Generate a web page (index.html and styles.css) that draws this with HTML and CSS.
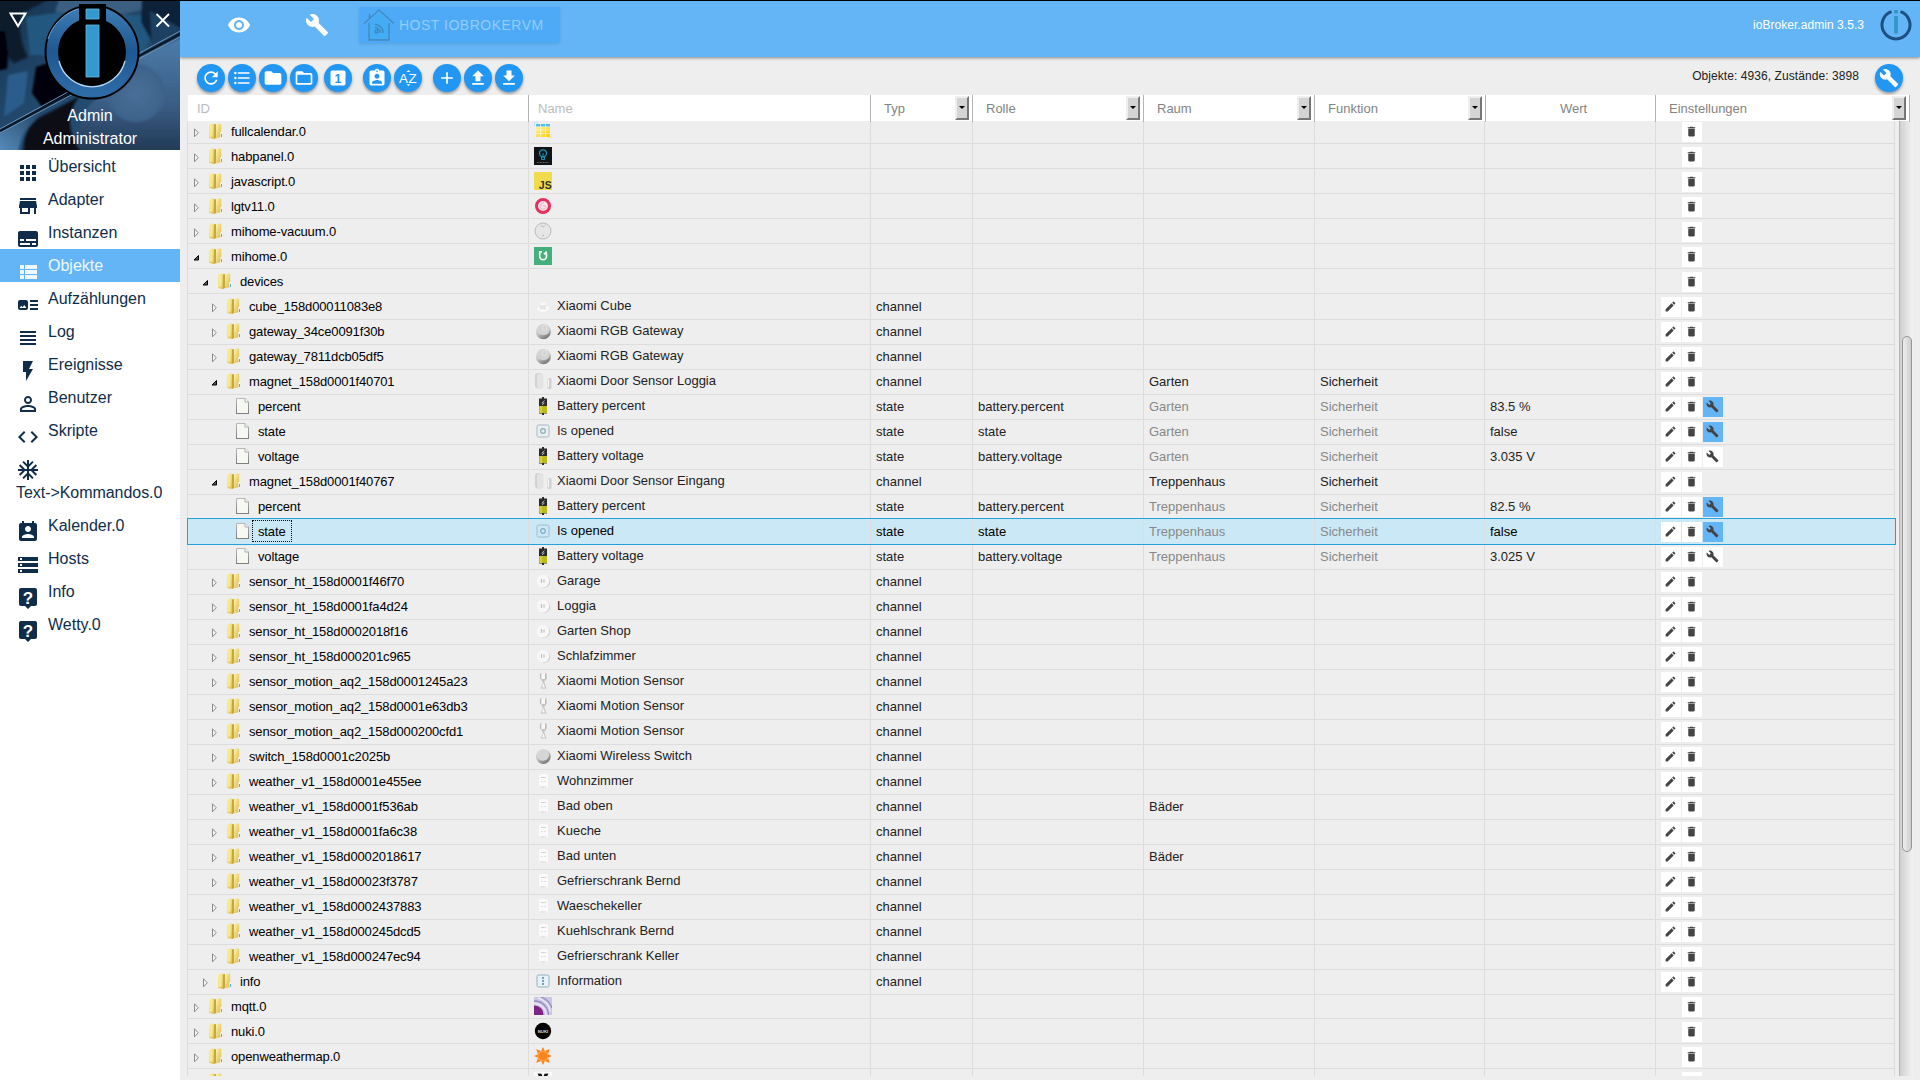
FILE: index.html
```html
<!DOCTYPE html>
<html lang="de">
<head>
    <meta charset="utf-8">
    <title>ioBroker.admin</title>
    <link rel="stylesheet" href="styles.css">
</head>
<body>
    <!-- shared gradients -->
    <svg class="gradients" width="0" height="0">
        <defs>
            <linearGradient id="g-folder" x1="0" x2="1" y1="0" y2="1"><stop offset="0" stop-color="#fdf6b0"/><stop offset="1" stop-color="#d9b548"/></linearGradient>
            <linearGradient id="g-doc" x1="0" x2="0" y1="0" y2="1"><stop offset="0" stop-color="#b8b8b8"/><stop offset="1" stop-color="#7c7c7c"/></linearGradient>
            <linearGradient id="g-ring" x1="0" x2="0" y1="0" y2="1"><stop offset="0" stop-color="#3a78b0"/><stop offset=".5" stop-color="#1f5791"/><stop offset="1" stop-color="#2d6ba6"/></linearGradient>
            <linearGradient id="g-knob" x1="0" x2=".6" y1="0" y2="1"><stop offset="0" stop-color="#f0f0f0"/><stop offset=".55" stop-color="#c4c4c4"/><stop offset="1" stop-color="#777"/></linearGradient>
            <linearGradient id="g-cal" x1="0" x2="1" y1="0" y2="1"><stop offset="0" stop-color="#fff0a0"/><stop offset="1" stop-color="#fc0"/></linearGradient>
        </defs>
    </svg>

    <!-- icon sprite -->
    <svg class="sprite">
        <symbol id="apps" viewBox="0 0 24 24"><path d="M4 8h4V4H4v4zm6 12h4v-4h-4v4zm-6 0h4v-4H4v4zm0-6h4v-4H4v4zm6 0h4v-4h-4v4zm6-10v4h4V4h-4zm-6 4h4V4h-4v4zm6 6h4v-4h-4v4zm0 6h4v-4h-4v4z"/></symbol>
        <symbol id="store" viewBox="0 0 24 24"><path d="M20 4H4v2h16V4zm1 10v-2l-1-5H4l-1 5v2h1v6h10v-6h4v6h2v-6h1zm-9 4H6v-4h6v4z"/></symbol>
        <symbol id="subtitles" viewBox="0 0 24 24"><path d="M20 4H4c-1.100 0-2 .9-2 2v12c0 1.100.9 2 2 2h16c1.100 0 2-.9 2-2V6c0-1.100-.9-2-2-2zM4 12h4v2H4v-2zm10 6H4v-2h10v2zm6 0h-4v-2h4v2zm0-4H10v-2h10v2z"/></symbol>
        <symbol id="view_list" viewBox="0 0 24 24"><path d="M4 14h4v-4H4v4zm0 5h4v-4H4v4zM4 9h4V5H4v4zm5 5h12v-4H9v4zm0 5h12v-4H9v4zM9 5v4h12V5H9z"/></symbol>
        <symbol id="art_track" viewBox="0 0 24 24"><path d="M22 13h-8v-2h8v2zm0-6h-8v2h8V7zm-8 10h8v-2h-8v2zm-2-8v6c0 1.100-.9 2-2 2H4c-1.100 0-2-.9-2-2V9c0-1.100.9-2 2-2h6c1.100 0 2 .9 2 2zm-1.500 6l-2.250-3-1.750 2.260-1.250-1.510L3.500 15h7z"/></symbol>
        <symbol id="headline" viewBox="0 0 24 24"><path d="M4 15h16v-2H4v2zm0 4h16v-2H4v2zm0-8h16V9H4v2zm0-6v2h16V5H4z"/></symbol>
        <symbol id="flash" viewBox="0 0 24 24"><path d="M7 2v11h3v9l7-12h-4l4-8z"/></symbol>
        <symbol id="person" viewBox="0 0 24 24"><path d="M12 5.900a2.100 2.100 0 1 1 0 4.200 2.100 2.100 0 0 1 0-4.200m0 9c2.970 0 6.100 1.460 6.100 2.100v1.100H5.900V17c0-.64 3.130-2.100 6.100-2.100M12 4C9.790 4 8 5.790 8 8s1.790 4 4 4 4-1.790 4-4-1.790-4-4-4zm0 9c-2.670 0-8 1.340-8 4v3h16v-3c0-2.660-5.330-4-8-4z"/></symbol>
        <symbol id="code" viewBox="0 0 24 24"><path d="M9.400 16.600L4.800 12l4.600-4.600L8 6l-6 6 6 6 1.400-1.400zm5.200 0l4.600-4.600-4.600-4.600L16 6l6 6-6 6-1.400-1.400z"/></symbol>
        <symbol id="ac_unit" viewBox="0 0 24 24"><path d="M22 11h-4.170l3.240-3.240-1.410-1.420L15 11h-2V9l4.660-4.660-1.420-1.410L13 6.170V2h-2v4.170L7.760 2.930 6.340 4.340 11 9v2H9L4.340 6.340 2.930 7.760 6.170 11H2v2h4.170l-3.240 3.240 1.410 1.420L9 13h2v2l-4.660 4.660 1.420 1.410L11 17.830V22h2v-4.170l3.240 3.240 1.420-1.410L13 15v-2h2l4.660 4.660 1.410-1.420L17.830 13H22z"/></symbol>
        <symbol id="contact" viewBox="0 0 24 24"><path d="M19 3h-1V1h-2v2H8V1H6v2H5c-1.110 0-2 .9-2 2v14c0 1.100.89 2 2 2h14c1.100 0 2-.9 2-2V5c0-1.100-.9-2-2-2zm-7 3c1.660 0 3 1.340 3 3s-1.340 3-3 3-3-1.340-3-3 1.340-3 3-3zm6 12H6v-1c0-2 4-3.100 6-3.100s6 1.100 6 3.100v1z"/></symbol>
        <symbol id="storage" viewBox="0 0 24 24"><path d="M2 20h20v-4H2v4zm2-3h2v2H4v-2zM2 4v4h20V4H2zm4 3H4V5h2v2zm-4 7h20v-4H2v4zm2-3h2v2H4v-2z"/></symbol>
        <symbol id="live_help" viewBox="0 0 24 24"><path d="M19 2H5c-1.100 0-2 .9-2 2v14c0 1.100.9 2 2 2h4l3 3 3-3h4c1.100 0 2-.9 2-2V4c0-1.100-.9-2-2-2z"/><text x="12" y="17.500" font-size="17" font-weight="bold" text-anchor="middle" fill="#fff">?</text></symbol>
        <symbol id="eye" viewBox="0 0 24 24"><path d="M12 4.500C7 4.500 2.730 7.610 1 12c1.730 4.390 6 7.500 11 7.500s9.270-3.110 11-7.500c-1.730-4.390-6-7.500-11-7.500zM12 17c-2.760 0-5-2.240-5-5s2.240-5 5-5 5 2.240 5 5-2.240 5-5 5zm0-8c-1.660 0-3 1.340-3 3s1.340 3 3 3 3-1.340 3-3-1.340-3-3-3z"/></symbol>
        <symbol id="build" viewBox="0 0 24 24"><path d="M22.700 19l-9.100-9.100c.9-2.300.4-5-1.500-6.900-2-2-5-2.400-7.400-1.300L9 6 6 9 1.600 4.700C.4 7.100.9 10.100 2.900 12.100c1.900 1.900 4.600 2.400 6.900 1.500l9.100 9.100c.4.4 1 .4 1.400 0l2.300-2.300c.5-.4.5-1.100.1-1.400z"/></symbol>
        <symbol id="refresh" viewBox="0 0 24 24"><path d="M17.650 6.350C16.200 4.900 14.210 4 12 4c-4.420 0-7.990 3.580-7.990 8s3.570 8 7.990 8c3.730 0 6.840-2.550 7.730-6h-2.080c-.82 2.330-3.040 4-5.650 4-3.310 0-6-2.690-6-6s2.690-6 6-6c1.660 0 3.140.69 4.220 1.780L13 11h7V4l-2.350 2.350z"/></symbol>
        <symbol id="list" viewBox="0 0 24 24"><path d="M4 10.500a1.500 1.500 0 1 0 0 3 1.500 1.500 0 0 0 0-3zm0-6a1.500 1.500 0 1 0 0 3 1.500 1.500 0 0 0 0-3zm0 12a1.500 1.500 0 1 0 0 3 1.500 1.500 0 0 0 0-3zM7 19h14v-2H7v2zm0-6h14v-2H7v2zm0-8v2h14V5H7z"/></symbol>
        <symbol id="folder" viewBox="0 0 24 24"><path d="M10 4H4c-1.100 0-1.990.9-1.990 2L2 18c0 1.100.9 2 2 2h16c1.100 0 2-.9 2-2V8c0-1.100-.9-2-2-2h-8l-2-2z"/></symbol>
        <symbol id="folder_open" viewBox="0 0 24 24"><path d="M20 6h-8l-2-2H4c-1.100 0-1.990.9-1.990 2L2 18c0 1.100.9 2 2 2h16c1.100 0 2-.9 2-2V8c0-1.100-.9-2-2-2zm0 12H4V8h16v10z"/></symbol>
        <symbol id="looks_one" viewBox="0 0 24 24"><rect x="3" y="3" width="18" height="18" rx="2"/><text x="12" y="17.500" font-size="15" font-weight="bold" text-anchor="middle" fill="#2196f3">1</text></symbol>
        <symbol id="assignment" viewBox="0 0 24 24"><path d="M19 3h-4.180C14.400 1.840 13.300 1 12 1c-1.300 0-2.400.84-2.820 2H5c-1.100 0-2 .9-2 2v14c0 1.100.9 2 2 2h14c1.100 0 2-.9 2-2V5c0-1.100-.9-2-2-2zm-7 0c.55 0 1 .45 1 1s-.45 1-1 1-1-.45-1-1 .45-1 1-1zm0 4c1.660 0 3 1.340 3 3s-1.340 3-3 3-3-1.340-3-3 1.340-3 3-3zm6 12H6v-1.400c0-2 4-3.100 6-3.100s6 1.100 6 3.100V19z"/></symbol>
        <symbol id="sort_az" viewBox="0 0 24 24"><path d="M14.940 4.660h-4.720l2.360-2.360zM10.250 19.370h4.660l-2.330 2.330z"/><text x="1.200" y="17.700" font-size="16">A</text><text x="12.600" y="17.700" font-size="16">Z</text></symbol>
        <symbol id="add" viewBox="0 0 24 24"><path d="M19 13h-6v6h-2v-6H5v-2h6V5h2v6h6v2z"/></symbol>
        <symbol id="upload" viewBox="0 0 24 24"><path d="M9 16h6v-6h4l-7-7-7 7h4zm-4 2h14v2H5z"/></symbol>
        <symbol id="download" viewBox="0 0 24 24"><path d="M19 9h-4V3H9v6H5l7 7 7-7zM5 18v2h14v-2H5z"/></symbol>
        <symbol id="edit" viewBox="0 0 24 24"><path d="M3 17.250V21h3.750L17.810 9.940l-3.750-3.750L3 17.250zM20.710 7.040c.39-.39.39-1.020 0-1.410l-2.340-2.340c-.39-.39-1.020-.39-1.410 0l-1.830 1.830 3.750 3.750 1.830-1.830z"/></symbol>
        <symbol id="delete" viewBox="0 0 24 24"><path d="M6 19c0 1.100.9 2 2 2h8c1.100 0 2-.9 2-2V7H6v12zM19 4h-3.500l-1-1h-5l-1 1H5v2h14V4z"/></symbol>

        <!-- tree -->
        <symbol id="t-folder" viewBox="0 0 16 16"><path d="M1 1.500L5.500.3 7 1.500V16l-2.500-.3L1 15z" fill="url(#g-folder)"/><path d="M1.500 2l3-.6v12l-3 .6z" fill="#f6e98e"/><path d="M6 1.500l2-.5v14l-2 1z" fill="#c9a63c"/><path d="M8 1.200L12 .3l1.200 1V14L8 15.500z" fill="url(#g-folder)"/><path d="M12.300 9h1.700v5.300h-1.700z" fill="#f7f7f0"/><path d="M13 11h1v3h-1z" fill="#4ab0e8"/></symbol>
        <symbol id="t-doc" viewBox="0 0 16 16"><path d="M1.500.5h8.500l3.500 3.500v11.500h-12z" fill="#f6f9f2" stroke="url(#g-doc)"/><path d="M10 .5V4h3.500" fill="#fff" stroke="#aaa"/><path d="M1 15.500h13" stroke="#808080"/></symbol>
        <symbol id="t-closed" viewBox="0 0 16 16"><path d="M6.500 3.800v8L10.300 7.800z" fill="#f5f5f5" stroke="#8c8c8c"/></symbol>
        <symbol id="t-open" viewBox="0 0 16 16"><path d="M10.500 5.500v4.500H6z" fill="#595959" stroke="#000"/></symbol>

        <!-- object icons -->
        <symbol id="o-calendar" viewBox="0 0 18 18"><path d="M.5 4V.5H4" fill="none" stroke="#bfe6f5"/><path d="M14 15.500h3.500v-3" fill="none" stroke="#fde28a"/><rect x="2" y="2" width="14" height="2.400" fill="#4fbfe8"/><rect x="2" y="5" width="14" height="10" fill="url(#g-cal)"/><path d="M6.500 2v13M11.500 2v13M2 8h14M2 11.500h14" stroke="#fff6cf" stroke-width=".7"/></symbol>
        <symbol id="o-habpanel" viewBox="0 0 18 18"><rect width="18" height="18" fill="#111518"/><circle cx="9" cy="6.300" r="3.500" fill="none" stroke="#1795b5" stroke-width="1.300"/><path d="M7.500 9.500v3h3v-3M9 6v5" fill="none" stroke="#1795b5"/><path d="M3 15.500h12" stroke="#666" stroke-width="1" stroke-dasharray="1 .5"/></symbol>
        <symbol id="o-js" viewBox="0 0 18 18"><rect width="18" height="18" fill="#f0db4f"/><text x="4.800" y="16.500" font-size="10.500" font-weight="bold" fill="#323330">JS</text></symbol>
        <symbol id="o-lg" viewBox="0 0 18 18"><circle cx="9" cy="9" r="6.500" fill="#fbe4ea" stroke="#e5305f" stroke-width="3"/><path d="M6.500 7l1.500 2M9 9h3a3 3 0 1 1-2-2.800" fill="none" stroke="#f0a0b5" stroke-width=".8"/></symbol>
        <symbol id="o-vacuum" viewBox="0 0 18 18"><circle cx="9" cy="9" r="8" fill="#e6e6e6" stroke="#bdbdbd"/><path d="M6.500 3l2.500 2 2.500-2" fill="none" stroke="#bbb"/><circle cx="9" cy="13.500" r=".8" fill="#aaa"/></symbol>
        <symbol id="o-mihome" viewBox="0 0 18 18"><rect width="18" height="18" fill="#43b07c"/><path d="M8 4.800H5.700v4.500a3.400 3.400 0 0 0 6.800 0V6.500M10 7.500l2.700-2.900" fill="none" stroke="#fff" stroke-width="1.700"/></symbol>
        <symbol id="o-cube" viewBox="0 0 18 18"><ellipse cx="9" cy="11.500" rx="5.800" ry="3.200" fill="#fbfbfb"/><path d="M5.500 6.500h6.500v6H5.500z" fill="#e6e6e6"/><ellipse cx="8.800" cy="6.800" rx="3.200" ry="1.500" fill="#f8f8f8"/></symbol>
        <symbol id="o-gateway" viewBox="0 0 18 18"><circle cx="9.300" cy="9.800" r="7.500" fill="url(#g-knob)"/><ellipse cx="9.500" cy="7.500" rx="6.300" ry="5.500" fill="#d3d3d3"/><circle cx="10.500" cy="6" r="2.500" fill="none" stroke="#e6e6e6"/></symbol>
        <symbol id="o-switch" viewBox="0 0 18 18"><circle cx="9.300" cy="9.500" r="7.400" fill="url(#g-knob)"/><ellipse cx="9" cy="8" rx="6" ry="5.800" fill="#d6d6d6"/></symbol>
        <symbol id="o-magnet" viewBox="0 0 18 18"><rect x="1" y="1" width="7.500" height="15.500" rx="3" fill="#d2d2d2"/><rect x="3" y="1.500" width="6.500" height="15" rx="2.500" fill="#e3e3e3"/><rect x="13.500" y="6" width="4" height="11" rx="1.500" fill="#d0d0d0"/><path d="M14.500 7v8" stroke="#f8f8f8"/></symbol>
        <symbol id="o-battery" viewBox="0 0 18 18"><path d="M8 0h2v1.500h3v15h-3V18H8v-1.500H5v-15h3z" fill="#2a2a2a"/><path d="M5 9h8v7H5z" fill="#bdbb1c"/><path d="M7 9v7" stroke="#e6e65a"/><path d="M10.500 3.500L7.800 6h2.500L8 8" fill="none" stroke="#aaa"/></symbol>
        <symbol id="o-state" viewBox="0 0 18 18"><rect x="3" y="3" width="12" height="12" rx="1.500" fill="none" stroke="#9cbcc8"/><circle cx="9" cy="9" r="2.300" fill="none" stroke="#7eafc0" stroke-width="1.200"/></symbol>
        <symbol id="o-info" viewBox="0 0 18 18"><rect x="3" y="3" width="12" height="12" rx="1.500" fill="#e9f1f4" stroke="#8fb3c2"/><path d="M9 5v8" stroke="#2e7c96" stroke-width="1.300" stroke-dasharray="2 1"/></symbol>
        <symbol id="o-sensor" viewBox="0 0 18 18"><circle cx="10.300" cy="9.800" r="6" fill="#cfcfcf"/><circle cx="9" cy="9" r="6.300" fill="#f7f7f7"/><path d="M7.500 7v4M10 7.500v3" stroke="#c0c0c0" stroke-width="1.200"/></symbol>
        <symbol id="o-motion" viewBox="0 0 18 18"><path d="M6 1.500h1.500v5.500H6zM11 1.500h1.500V7H11z" fill="#b8b8b8"/><path d="M7.500 2H11v5H7.500z" fill="#f8f8f8"/><path d="M7 7h5v1.500h-1.500V11l2 5.500h-6L9 11z" fill="#c4c4c4"/><path d="M9.500 11l1.500 4.500H8z" fill="#f8f8f8"/></symbol>
        <symbol id="o-weather" viewBox="0 0 18 18"><rect x="5" y="2" width="9" height="14" rx="2.500" fill="#fafafa"/><path d="M7 5.500h5M7.500 9.500h1M10.500 9.500h1M6.500 15h6" stroke="#c8c8c8" stroke-width="1.200" stroke-dasharray="1.500 .5"/></symbol>
        <symbol id="o-mqtt" viewBox="0 0 18 18"><rect width="18" height="18" rx="1" fill="#cbc6e4"/><path d="M0 8.500a9 9 0 0 1 9.500 9.500H0z" fill="#7d2585"/><path d="M0 6.500A11.500 11.500 0 0 1 12 18M4 1a17 17 0 0 1 12.500 14" fill="none" stroke="#eceaf7" stroke-width="1.300"/><path d="M0 4A14 14 0 0 1 14.500 18M7 0a18 18 0 0 1 11 11" fill="none" stroke="#968dc2" stroke-width="1.300"/></symbol>
        <symbol id="o-nuki" viewBox="0 0 18 18"><circle cx="9" cy="9" r="8.200" fill="#000"/><text x="9" y="10.500" font-size="4.300" font-weight="bold" text-anchor="middle" fill="#ddd">NUKI</text></symbol>
        <symbol id="o-sun" viewBox="0 0 18 18"><path d="M9 0l1.800 4H7.200zM9 18l1.800-4H7.200zM0 9l4-1.800v3.600zM18 9l-4-1.800v3.600zM2.300 2.300l4.400 1.500-2.900 2.900zM15.700 2.300l-4.400 1.500 2.900 2.900zM2.300 15.700l4.400-1.500-2.900-2.900zM15.700 15.700l-4.400-1.500 2.900-2.900z" fill="#f7841b"/><circle cx="9" cy="9" r="5.500" fill="#ff9c33"/><circle cx="9" cy="9" r="4" fill="#fb8420"/></symbol>
        <symbol id="o-panda" viewBox="0 0 18 18"><rect width="18" height="18" fill="#fafafa"/><path d="M3.500 1.500l4 .3 1 2.700H5zM14.500 1.500l-4 .3-1 2.700H13z" fill="#111"/></symbol>
    </svg>

    <div class="layout">
        <aside class="sidebar">
            <div class="profile">
                <svg class="profile-bg" viewBox="0 0 180 149" width="180" height="149">
                    <defs>
                        <linearGradient id="bg1" x1="0" x2="1" y1="0" y2="1"><stop offset="0" stop-color="#16344f"/><stop offset=".5" stop-color="#234b70"/><stop offset="1" stop-color="#2c4a6b"/></linearGradient>
                        <linearGradient id="bg2" x1="0" x2="1" y1="1" y2="0"><stop offset="0" stop-color="#5b93c4"/><stop offset="1" stop-color="#16314c"/></linearGradient>
                        <radialGradient id="bg3"><stop offset="0" stop-color="#4a6f98"/><stop offset="1" stop-color="#3d638b"/></radialGradient>
                        <linearGradient id="bg4" x1="0" x2="0" y1="0" y2="1"><stop offset="0" stop-color="#4d7dab"/><stop offset=".6" stop-color="#385a81"/><stop offset="1" stop-color="#1f3650"/></linearGradient>
                        <filter id="soft"><feGaussianBlur stdDeviation="1.300"/></filter>
                    </defs>
                    <rect width="180" height="149" fill="url(#bg1)"/>
                    <g filter="url(#soft)">
                        <path d="M-5-5h60L22 12C16 30 24 50 28 56l-14 6C8 58 4 48-5 44z" fill="#0a1a2b"/>
                        <path d="M-5 30h10c2 14 4 26 2 38l-12 2z" fill="#02060b"/>
                        <path d="M26 16l44-6 90 6-20 40-110-2z" fill="#235880"/>
                        <path d="M60-5h85l-4 14-26 6-60-4z" fill="#3b5f80"/>
                        <path d="M142-5h43v34l-32 14-12-22z" fill="#0f2439"/>
                        <path d="M150 10l32 18-30 18z" fill="#1c4060"/>
                        <path d="M36 66l24-8 16 34-34 14-10-14z" fill="#020408"/>
                        <path d="M8 74l20-4-4 32-20 14z" fill="#2c5d8c"/>
                        <path d="M138 56l45-20v120H68l20-50z" fill="url(#bg4)"/>
                        <circle cx="136" cy="92" r="29" fill="url(#bg3)"/>
                        <path d="M24 155c-2-22 6-36 26-44l30-16c-14 16-14 36 4 60z" fill="#070f19"/>
                        <path d="M-5 134l60-34c-20 18-34 24-37 55H-5z" fill="url(#bg2)"/>
                    </g>
                    <path d="M0 128L180 30M0 132L180 36" stroke="#6d93b8" stroke-width="1"/>
                    <path d="M0 130L180 33" stroke="#0a1724" stroke-width="2"/>
                    <circle cx="92" cy="51" r="47.500" fill="#000"/>
                    <circle cx="92" cy="51" r="39.700" fill="none" stroke="url(#g-ring)" stroke-width="11.500"/>
                    <path d="M59 60a34 34 0 0 0 66 0" fill="none" stroke="#b9d4ee" stroke-width="1.300"/>
                    <path d="M48 38a46 46 0 0 1 30-30" fill="none" stroke="#6ea1cf"/>
                    <path d="M79 3h27v21H79z" fill="#000"/>
                    <path d="M86 8h13v10H86zM86 24h13v52H86z" fill="#3399cf" stroke="#68bbe5" stroke-width=".8"/>
                    <path d="M10.500 12.500h15L18 25z" fill="none" stroke="#fff" stroke-width="2"/>
                    <path d="M156.500 13l12.500 12.500M169 13l-12.500 12.500" stroke="#fff" stroke-width="1.800"/>
                </svg>
                <div class="profile-name">Admin<br>Administrator</div>
            </div>
            <ul class="menu">
                <li><svg><use href="#apps"/></svg>Übersicht</li>
                <li><svg><use href="#store"/></svg>Adapter</li>
                <li><svg><use href="#subtitles"/></svg>Instanzen</li>
                <li class="active"><svg><use href="#view_list"/></svg>Objekte</li>
                <li><svg><use href="#art_track"/></svg>Aufzählungen</li>
                <li><svg><use href="#headline"/></svg>Log</li>
                <li><svg><use href="#flash"/></svg>Ereignisse</li>
                <li><svg><use href="#person"/></svg>Benutzer</li>
                <li><svg><use href="#code"/></svg>Skripte</li>
                <li class="long"><svg><use href="#ac_unit"/></svg>Text-&gt;Kommandos.0</li>
                <li><svg><use href="#contact"/></svg>Kalender.0</li>
                <li><svg><use href="#storage"/></svg>Hosts</li>
                <li><svg><use href="#live_help"/></svg>Info</li>
                <li><svg><use href="#live_help"/></svg>Wetty.0</li>
            </ul>
        </aside>

        <main class="main">
            <header class="topbar">
                <svg class="top-icon"><use href="#eye"/></svg>
                <svg class="top-icon"><use href="#build"/></svg>
                <div class="host-btn">
                    <svg width="30" height="32" viewBox="0 0 30 32"><path d="M5 13.500v17.500h20V13.500L15 3.500z" fill="#42adf5"/><path d="M5 14v17h20V14M0 14.500L15 1l15 13.500M5.500 10V5" fill="none" stroke="#4187bf" stroke-width="1.300"/><g fill="none" stroke="#4187bf" stroke-width="1.400"><circle cx="12.500" cy="22.500" r="1.500"/><path d="M11 18.500a5 5 0 0 1 5 5.500M11 15.500a8 8 0 0 1 8 8.500"/></g></svg>
                    HOST IOBROKERVM
                </div>
                <span class="version">ioBroker.admin 3.5.3</span>
                <svg class="brand" width="32" height="32" viewBox="0 0 32 32"><path d="M11.500 2.700a14 14 0 1 0 9 0" fill="none" stroke="#1d4f83" stroke-width="3"/><path d="M14 1h4v3.500h-4zM14 7h4v17.500h-4z" fill="#3399cc"/></svg>
            </header>

            <div class="toolbar">
                <button class="fab"><svg><use href="#refresh"/></svg></button>
                <button class="fab"><svg><use href="#list"/></svg></button>
                <button class="fab"><svg><use href="#folder"/></svg></button>
                <button class="fab"><svg><use href="#folder_open"/></svg></button>
                <button class="fab gap-s"><svg><use href="#looks_one"/></svg></button>
                <button class="fab gap-m"><svg><use href="#assignment"/></svg></button>
                <button class="fab"><svg><use href="#sort_az"/></svg></button>
                <button class="fab gap-m"><svg><use href="#add"/></svg></button>
                <button class="fab"><svg><use href="#upload"/></svg></button>
                <button class="fab"><svg><use href="#download"/></svg></button>
                <span class="counts">Objekte: 4936, Zustände: 3898</span>
                <button class="fab"><svg><use href="#build"/></svg></button>
            </div>

            <div class="grid-head">
                <div class="light">ID</div>
                <div class="light">Name</div>
                <div class="sel">Typ<i></i></div>
                <div class="sel">Rolle<i></i></div>
                <div class="sel">Raum<i></i></div>
                <div class="sel">Funktion<i></i></div>
                <div class="center">Wert</div>
                <div class="sel">Einstellungen<i></i></div>
            </div>
            <div class="grid-body">
                <div class="rows" id="rows"></div>
                <div class="scroll"><div class="thumb"></div></div>
            </div>
        </main>
    </div>

    <script src="rows.js"></script>
</body>
</html>
```

FILE: styles.css
```css
* {
    box-sizing: border-box;
}
body {
    margin: 0;
    height: 1080px;
    overflow: hidden;
    border-top: 1px solid #000;
    background: #eee;
    font-family: "Liberation Sans", Arial, sans-serif;
    font-size: 13px;
    color: #222;
}
.sprite {
    display: none;
}
.gradients {
    position: absolute;
}
svg {
    flex: none;
    fill: currentColor;
}
.layout {
    display: flex;
    height: 1079px;
}

/* sidebar */
.sidebar {
    width: 180px;
    background: #fff;
    color: #0f2d4a;
    font-size: 16px;
}
.profile {
    position: relative;
    height: 149px;
    overflow: hidden;
}
.profile-bg {
    display: block;
}
.profile-name {
    position: absolute;
    left: 0;
    right: 0;
    top: 103px;
    line-height: 23px;
    text-align: center;
    color: #fff;
}
.menu {
    list-style: none;
    margin: 0;
    padding: 0;
}
.menu li {
    display: flex;
    height: 33px;
    line-height: 33px;
    padding-left: 16px;
    gap: 8px;
}
.menu svg {
    width: 24px;
    height: 24px;
    margin-top: 11px;
}
.menu .active {
    background: #64b5f6;
    color: #f0f8ff;
}
.menu .long {
    flex-direction: column;
    height: 62px;
    line-height: 21px;
    gap: 0;
    letter-spacing: -.05px;
}

/* top bar */
.main {
    flex: 1;
    display: flex;
    flex-direction: column;
    min-width: 0;
}
.topbar {
    display: flex;
    height: 56px;
    flex: none;
    padding: 6px 8px 0 47px;
    background: #64b5f6;
    color: #fff;
    box-shadow: 0 1px 3px rgba(0,0,0,.45);
}
.top-icon {
    width: 24px;
    height: 24px;
    margin: 6px 54px 0 0;
}
.top-icon + .top-icon {
    margin-right: 30px;
}
.host-btn {
    display: flex;
    align-items: center;
    gap: 5px;
    width: 201px;
    height: 36px;
    padding-left: 5px;
    border-radius: 2px;
    background: #4eaaf7;
    color: #93ccfa;
    font-size: 14px;
    letter-spacing: .5px;
    box-shadow: 0 1px 3px rgba(0,0,0,.12);
}
.version {
    margin: 11px 16px 0 auto;
    font-size: 12px;
    letter-spacing: .05px;
}
.brand {
    margin-top: 2px;
}

/* toolbar */
.toolbar {
    display: flex;
    flex: none;
    height: 38px;
    padding: 7px 17px 0;
    gap: 3px;
}
.fab {
    display: flex;
    align-items: center;
    justify-content: center;
    width: 28px;
    height: 28px;
    padding: 0;
    border: none;
    border-radius: 50%;
    background: #2196f3;
    color: #fff;
    box-shadow: 0 2px 3px rgba(0,0,0,.35);
}
.fab svg {
    width: 20px;
    height: 20px;
    overflow: visible;
}
.gap-s {
    margin-left: 3px;
}
.gap-m {
    margin-left: 8px;
}
.counts {
    margin: 5px 13px 0 auto;
    font-size: 12px;
    letter-spacing: .07px;
}

/* table */
.grid-head,
.row {
    display: grid;
    grid-template-columns: 341px 342px 102px 171px 171px 170px 171px 239px;
}
.grid-head {
    flex: none;
    grid-template-columns: 341px 342px 102px 171px 171px 171px 170px 254px;
    width: 1722px;
    height: 26px;
    margin-left: 8px;
    background: #fff;
    color: #838383;
    line-height: 27px;
}
.grid-head div {
    position: relative;
    padding-left: 13px;
    border-right: 1px solid #b4b4b4;
}
.grid-head .light {
    padding-left: 9px;
    color: #bbb;
}
.grid-head .center {
    padding: 0 0 0 6px;
    text-align: center;
}
.sel i {
    position: absolute;
    right: 3px;
    top: 1px;
    width: 14px;
    height: 24px;
    background: #d4d4d4;
    border: 2px solid;
    border-color: #efefef #767676 #767676 #efefef;
}
.sel i::after {
    content: "";
    position: absolute;
    left: 2px;
    top: 8px;
    border: 3px solid transparent;
    border-top-color: #000;
    border-bottom: 0;
}
.grid-body {
    display: flex;
    gap: 4px;
    height: 955px;
    margin-left: 7px;
    overflow: hidden;
}
.rows {
    width: 1708px;
    margin-top: -2px;
    border-left: 1px solid #ddd;
}
.row {
    height: 25px;
    line-height: 25px;
}
.row > div {
    display: flex;
    padding-left: 5px;
    border-right: 1px solid #ddd;
    border-bottom: 1px solid #ddd;
    white-space: nowrap;
}
.row.selected {
    position: relative;
    background: #cbe8f6;
    outline: 1px solid #26a0da;
    color: #000;
}
.row.selected > div {
    border-bottom-color: transparent;
}
.row .tree {
    padding-left: 0;
    color: #000;
    letter-spacing: -.13px;
}
.tree svg {
    width: 16px;
    height: 16px;
    margin-top: 4px;
}
.tree .arrow {
    margin: 6px 4px 0 0;
}
.title {
    height: 22px;
    margin: 1px 0 0 1px;
    padding: 0 5px;
    border: 1px solid transparent;
    line-height: 21px;
}
.selected .title {
    border: 1px dotted #000;
}
.row .name svg {
    width: 18px;
    height: 18px;
    margin: 3px 5px 0 0;
}
.row .name {
    line-height: 23px;
}
.row .inherited {
    color: #888;
}
.row .actions {
    padding: 3px 0 0 5px;
    gap: 1px;
}
.act {
    width: 20px;
    height: 20px;
    padding: 3px;
    background: #fff;
    color: #444;
}
.act.empty {
    visibility: hidden;
}
.act.on {
    background: #64b5f6;
}
.act svg {
    display: block;
    width: 13px;
    height: 13px;
}
.scroll {
    width: 14px;
    padding: 215px 2px 0;
    border-left: 1px solid #b5b5b5;
    background: linear-gradient(to right, #d0d0d0, #f3f3f3);
}
.thumb {
    width: 10px;
    height: 516px;
    border: 1px solid #969696;
    border-radius: 5px;
    background: linear-gradient(to right, #eee, #cdcdcd);
}
```

FILE: rows.js
```js
// [level, node, id, icon, name, type, role, room, function, value, custom]
// node: c = closed folder, o = open folder, d = document
// rooms and functions starting with "~" are inherited from the channel
const rows = [
    [0, 'c', 'fullcalendar.0', 'calendar'],
    [0, 'c', 'habpanel.0', 'habpanel'],
    [0, 'c', 'javascript.0', 'js'],
    [0, 'c', 'lgtv11.0', 'lg'],
    [0, 'c', 'mihome-vacuum.0', 'vacuum'],
    [0, 'o', 'mihome.0', 'mihome'],
    [1, 'o', 'devices', ''],
    [2, 'c', 'cube_158d00011083e8', 'cube', 'Xiaomi Cube', 'channel'],
    [2, 'c', 'gateway_34ce0091f30b', 'gateway', 'Xiaomi RGB Gateway', 'channel'],
    [2, 'c', 'gateway_7811dcb05df5', 'gateway', 'Xiaomi RGB Gateway', 'channel'],
    [2, 'o', 'magnet_158d0001f40701', 'magnet', 'Xiaomi Door Sensor Loggia', 'channel', '', 'Garten', 'Sicherheit'],
    [3, 'd', 'percent', 'battery', 'Battery percent', 'state', 'battery.percent', '~Garten', '~Sicherheit', '83.5 %', 'on'],
    [3, 'd', 'state', 'state', 'Is opened', 'state', 'state', '~Garten', '~Sicherheit', 'false', 'on'],
    [3, 'd', 'voltage', 'battery', 'Battery voltage', 'state', 'battery.voltage', '~Garten', '~Sicherheit', '3.035 V', 'off'],
    [2, 'o', 'magnet_158d0001f40767', 'magnet', 'Xiaomi Door Sensor Eingang', 'channel', '', 'Treppenhaus', 'Sicherheit'],
    [3, 'd', 'percent', 'battery', 'Battery percent', 'state', 'battery.percent', '~Treppenhaus', '~Sicherheit', '82.5 %', 'on'],
    [3, 'd', 'state', 'state', 'Is opened', 'state', 'state', '~Treppenhaus', '~Sicherheit', 'false', 'on'],
    [3, 'd', 'voltage', 'battery', 'Battery voltage', 'state', 'battery.voltage', '~Treppenhaus', '~Sicherheit', '3.025 V', 'off'],
    [2, 'c', 'sensor_ht_158d0001f46f70', 'sensor', 'Garage', 'channel'],
    [2, 'c', 'sensor_ht_158d0001fa4d24', 'sensor', 'Loggia', 'channel'],
    [2, 'c', 'sensor_ht_158d0002018f16', 'sensor', 'Garten Shop', 'channel'],
    [2, 'c', 'sensor_ht_158d000201c965', 'sensor', 'Schlafzimmer', 'channel'],
    [2, 'c', 'sensor_motion_aq2_158d0001245a23', 'motion', 'Xiaomi Motion Sensor', 'channel'],
    [2, 'c', 'sensor_motion_aq2_158d0001e63db3', 'motion', 'Xiaomi Motion Sensor', 'channel'],
    [2, 'c', 'sensor_motion_aq2_158d000200cfd1', 'motion', 'Xiaomi Motion Sensor', 'channel'],
    [2, 'c', 'switch_158d0001c2025b', 'switch', 'Xiaomi Wireless Switch', 'channel'],
    [2, 'c', 'weather_v1_158d0001e455ee', 'weather', 'Wohnzimmer', 'channel'],
    [2, 'c', 'weather_v1_158d0001f536ab', 'weather', 'Bad oben', 'channel', '', 'Bäder'],
    [2, 'c', 'weather_v1_158d0001fa6c38', 'weather', 'Kueche', 'channel'],
    [2, 'c', 'weather_v1_158d0002018617', 'weather', 'Bad unten', 'channel', '', 'Bäder'],
    [2, 'c', 'weather_v1_158d00023f3787', 'weather', 'Gefrierschrank Bernd', 'channel'],
    [2, 'c', 'weather_v1_158d0002437883', 'weather', 'Waeschekeller', 'channel'],
    [2, 'c', 'weather_v1_158d000245dcd5', 'weather', 'Kuehlschrank Bernd', 'channel'],
    [2, 'c', 'weather_v1_158d000247ec94', 'weather', 'Gefrierschrank Keller', 'channel'],
    [1, 'c', 'info', 'info', 'Information', 'channel'],
    [0, 'c', 'mqtt.0', 'mqtt'],
    [0, 'c', 'nuki.0', 'nuki'],
    [0, 'c', 'openweathermap.0', 'sun'],
    [0, 'c', '', 'panda']
];
const selected = 16;

function icon(id, cls) {
    return `<svg class="${cls || ''}"><use href="#${id}"/></svg>`;
}

function cell(text) {
    text = text || '';
    if (text[0] === '~') {
        return `<div class="inherited">${text.slice(1)}</div>`;
    }
    return `<div>${text}</div>`;
}

function renderRow(row, index) {
    const [level, node, id, img, name, type, role, room, func, value, custom] = row;
    const arrow = node === 'd' ? '' : icon(node === 'o' ? 't-open' : 't-closed', 'arrow');
    // documents have no arrow, so they start one arrow width further right
    const indent = level * 9 + (node === 'd' ? 20 : 0);

    return `<div class="row ${index === selected ? 'selected' : ''}">
        <div class="tree" style="padding-left: ${indent}px">${arrow}${icon(node === 'd' ? 't-doc' : 't-folder')}<span class="title">${id}</span></div>
        <div class="name">${img ? icon('o-' + img) : ''}${name || ''}</div>
        ${cell(type)}${cell(role)}${cell(room)}${cell(func)}${cell(value)}
        <div class="actions">
            <span class="act ${type ? '' : 'empty'}">${icon('edit')}</span>
            <span class="act">${icon('delete')}</span>
            ${custom ? `<span class="act ${custom}">${icon('build')}</span>` : ''}
        </div>
    </div>`;
}

document.getElementById('rows').innerHTML = rows.map(renderRow).join('');
```
